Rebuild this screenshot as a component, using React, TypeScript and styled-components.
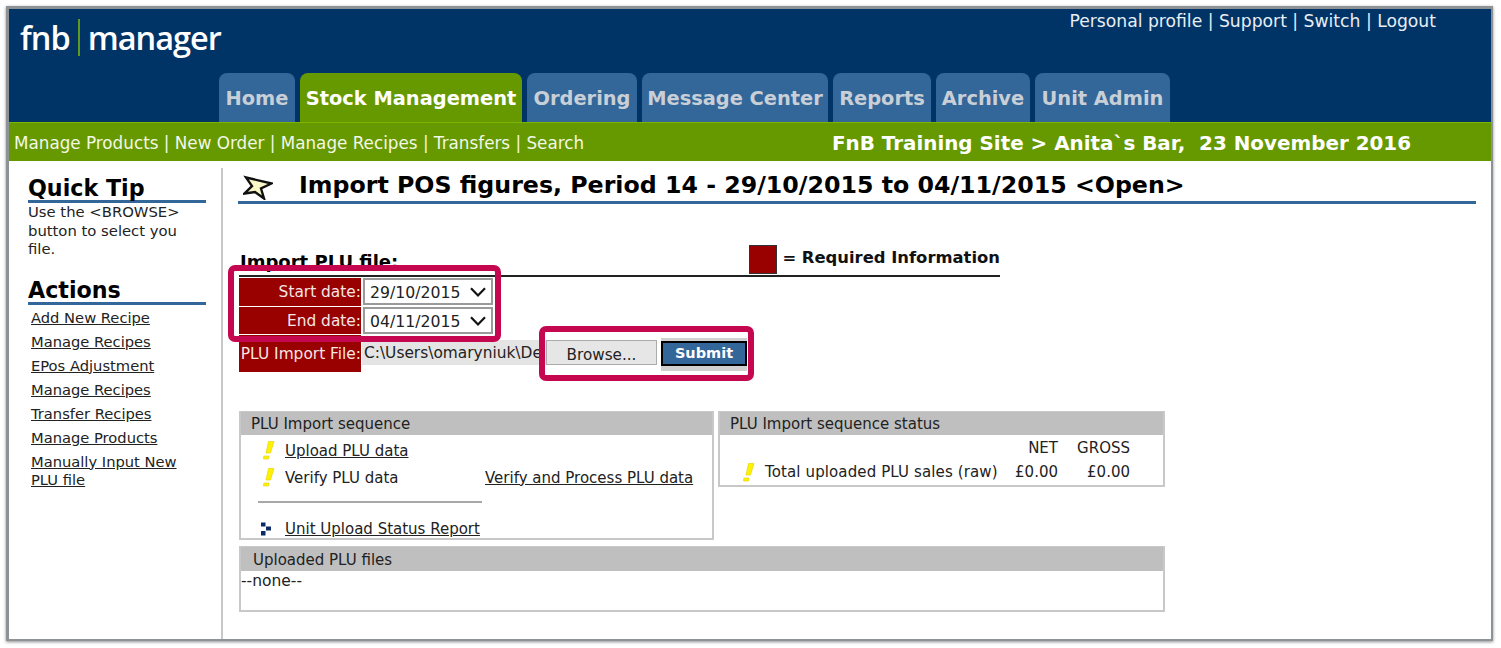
import React from "react";
import styled, { createGlobalStyle } from "styled-components";

const Navy = "#003366";
const Green = "#669900";
const Blue = "#336699";
const Crimson = "#990000";
const Mark = "#c4074f";
const Rule = "#c8c8c8";

const GlobalStyle = createGlobalStyle`
  html, body {
    margin: 0;
    padding: 0;
    background: #fff;
    font-family: "DejaVu Sans", Verdana, sans-serif;
    color: #111;
  }
  * { box-sizing: border-box; }
`;

const Page = styled.div`
  position: relative;
  width: 1501px;
  height: 648px;
  padding: 6px 8px 7px 6px;
  overflow: hidden;
`;

const Frame = styled.div`
  height: 100%;
  border: 1px solid #8d9296;
  border-width: 3px 2px 2px 3px;
  box-shadow: 0 1px 3px rgba(0, 0, 0, 0.45);
  background: #fff;
  display: flex;
  flex-direction: column;
`;

const Header = styled.header`
  height: 113px;
  background: ${Navy};
  display: flex;
  flex-direction: column;
  flex-shrink: 0;
`;

const TopRow = styled.div`
  height: 64px;
  display: flex;
  justify-content: space-between;
  padding: 3px 55px 0 11px;
`;

const Logo = styled.div`
  display: flex;
  align-items: center;
  height: 40px;
  margin-top: 5px;
  font-family: "Open Sans", sans-serif;
  font-size: 32.5px;
  font-weight: 600;
  color: #fff;
  letter-spacing: -1px;
`;

const LogoBar = styled.span`
  width: 2px;
  height: 37px;
  background: #5f9a1e;
  margin: 0 8px 0 8px;
`;

const UserLinks = styled.div`
  font-size: 17.2px;
  line-height: 18px;
  color: #e8eef4;
  white-space: pre;
`;

const Tabs = styled.nav`
  display: flex;
  gap: 5px;
  height: 49px;
  padding-left: 210px;
`;

const Tab = styled.div<{ $active?: boolean; $width: number }>`
  width: ${p => p.$width}px;
  display: flex;
  align-items: center;
  justify-content: center;
  padding-top: 2px;
  border-radius: 8px 8px 0 0;
  background: ${p => (p.$active ? Green : Blue)};
  color: ${p => (p.$active ? "#fff" : "#c9cfd6")};
  font-size: 19.4px;
  font-weight: 700;
  white-space: nowrap;
`;

const SubBar = styled.div`
  height: 39px;
  flex-shrink: 0;
  background: ${Green};
  border-top: 1px solid #7cb400;
  color: #f3f7e6;
  display: flex;
  align-items: center;
  justify-content: space-between;
  padding: 0 80px 0 5px;
`;

const SubLinks = styled.div`
  font-size: 16.8px;
  padding-top: 2px;
  white-space: pre;
`;

const SiteInfo = styled.div`
  font-size: 19.9px;
  font-weight: 700;
  padding-top: 2px;
  color: #fff;
  white-space: pre;
`;

const Body = styled.div`
  flex: 1;
  display: flex;
  min-height: 0;
  padding-top: 7px;
`;

const Sidebar = styled.aside`
  width: 214px;
  flex-shrink: 0;
  border-right: 2px solid ${Rule};
  padding: 0 15px 0 19px;
`;

const SideHeading = styled.h2`
  margin: 0;
  height: 35px;
  padding-top: 7px;
  font-size: 22.2px;
  line-height: 26px;
  font-weight: 700;
  color: #000;
  border-bottom: 3px solid ${Blue};
`;

const TipText = styled.p`
  margin: 0 0 11px;
  font-size: 14.8px;
  line-height: 18.5px;
  color: #222;
`;

const ActionList = styled.ul`
  list-style: none;
  margin: 0;
  padding: 4px 0 0 3px;
  display: flex;
  flex-direction: column;
  gap: 6px;
`;

const ActionItem = styled.li`
  font-size: 14.7px;
  line-height: 18px;
  color: #222;
  text-decoration: underline;
`;

const Content = styled.main`
  flex: 1;
  min-width: 0;
  padding: 0 15px 0 15px;
`;

const TitleRow = styled.div`
  height: 36px;
  display: flex;
  align-items: center;
  gap: 26px;
  padding-left: 5px;
  border-bottom: 3px solid ${Blue};
`;

const Title = styled.h1`
  margin: 0;
  font-size: 23.7px;
  font-weight: 700;
  color: #000;
  white-space: nowrap;
`;

const FormArea = styled.div`
  padding-left: 1px;
`;

const ImportHead = styled.div`
  width: 761px;
  height: 73px;
  display: flex;
  justify-content: space-between;
  align-items: flex-end;
  padding: 0 0 0 1px;
  border-bottom: 2px solid #222;
`;

const ImportTitle = styled.h3`
  margin: 0 0 3px;
  font-size: 18px;
  line-height: 20px;
  font-weight: 700;
  color: #000;
`;

const Legend = styled.div`
  display: flex;
  align-items: center;
  gap: 5px;
  font-size: 16.4px;
  font-weight: 700;
  color: #111;
  margin-bottom: 1px;
`;

const LegendText = styled.span`
  padding-bottom: 4px;
`;

const Swatch = styled.span`
  width: 28px;
  height: 29px;
  background: ${Crimson};
  border: 1px solid #333;
`;

const FormRow = styled.div<{ $height: number }>`
  display: flex;
  height: ${p => p.$height}px;
  margin-top: 1px;
`;

const FormLabel = styled.div<{ $tall?: boolean }>`
  width: 122px;
  flex-shrink: 0;
  background: ${Crimson};
  color: #f4e6e6;
  font-size: 15.4px;
  text-align: right;
  padding: ${p => (p.$tall ? "10px 0 0 0" : "4.5px 0 0 0")};
  white-space: nowrap;
`;

const DateSelect = styled.div`
  width: 130px;
  height: 27px;
  margin-left: 2px;
  border: 2px solid #9a9a9a;
  background: #fff;
  display: flex;
  align-items: center;
  justify-content: space-between;
  padding: 1px 5px 0 5px;
  font-size: 15.7px;
  color: #222;
`;

const FileField = styled.div`
  width: 184px;
  height: 25px;
  margin: 5px 0 0 1px;
  background: #e4e4e4;
  font-size: 15.4px;
  line-height: 27px;
  color: #222;
  padding-left: 2px;
  white-space: nowrap;
`;

const BrowseButton = styled.button`
  width: 111px;
  height: 25px;
  margin-top: 5px;
  background: #e6e6e6;
  border: 1px solid #ababab;
  font: 15.2px "DejaVu Sans", sans-serif;
  color: #222;
  padding: 4px 0 0;
`;

const SubmitWrap = styled.div`
  margin: 3px 0 0 4px;
  width: 86px;
  height: 33px;
  background: #d0d0d0;
  padding: 3px 0 5px;
`;

const SubmitButton = styled.button`
  width: 100%;
  height: 100%;
  background: ${Blue};
  border: 2px solid #000;
  color: #fff;
  font: 700 14.5px "DejaVu Sans", sans-serif;
  padding: 0 0 2px;
`;

const PanelGrid = styled.div`
  display: grid;
  grid-template-columns: 475px 447px;
  column-gap: 4px;
  align-items: start;
  width: 926px;
  margin-top: 39px;
`;

const Panel = styled.section<{ $height: number }>`
  height: ${p => p.$height}px;
  border: 2px solid ${Rule};
  border-top-width: 1px;
  background: #fff;
  font-size: 15px;
  color: #222;
`;

const WidePanel = styled(Panel)`
  width: 926px;
  margin-top: 6px;
`;

const PanelHead = styled.div<{ $indent: number }>`
  height: 23px;
  background: #bfbfbf;
  line-height: 25px;
  padding-left: ${p => p.$indent}px;
  color: #222;
`;

const WideHead = styled(PanelHead)`
  height: 24px;
  line-height: 26px;
`;

const SeqList = styled.div`
  padding-top: 2px;
`;

const SeqRow = styled.div`
  display: flex;
  align-items: center;
  height: 27px;
  padding-left: 22px;
`;

const SeqIcon = styled.span`
  width: 22px;
  display: flex;
  flex-shrink: 0;
`;

const PointerIcon = styled(SeqIcon)`
  width: 25px;
  margin-left: -3px;
`;

const Underlined = styled.span`
  text-decoration: underline;
`;

const SeqSplit = styled.span`
  width: 200px;
`;

const Divider = styled.hr`
  width: 224px;
  height: 2px;
  margin: 10px 0 12px 17px;
  border: 0;
  background: #a8a8a8;
`;

const StatusHead = styled.div`
  display: grid;
  grid-template-columns: 1fr 60px 72px;
  text-align: right;
  padding: 2px 33px 0 0;
  height: 25px;
  line-height: 22px;
`;

const StatusRow = styled.div`
  display: grid;
  grid-template-columns: 1fr 60px 72px;
  align-items: center;
  height: 24px;
  padding: 0 33px 0 23px;
`;

const StatusLabel = styled.span`
  display: flex;
  align-items: center;
  white-space: nowrap;
  letter-spacing: 0.12px;
`;

const StatusValue = styled.span`
  text-align: right;
`;

const NoneText = styled.div`
  font-size: 15.5px;
  line-height: 20px;
`;

// the crimson rounded callouts drawn over the screenshot
const Callout = styled.div<{ $x: number; $y: number; $w: number; $h: number }>`
  position: absolute;
  left: ${p => p.$x}px;
  top: ${p => p.$y}px;
  width: ${p => p.$w}px;
  height: ${p => p.$h}px;
  border: 6px solid ${Mark};
  border-radius: 7px;
  pointer-events: none;
`;

const Exclaim = () => (
  <svg width="12" height="19" viewBox="0 0 12 19">
    <path d="M5.5 0.5 L11 0.5 L7.5 12 L3 12 Z" fill="#fff200" stroke="#e0d000" strokeWidth="0.6" />
    <path d="M0.8 15 L6 15 L5.5 18 L0.5 18 Z" fill="#fff200" stroke="#e0d000" strokeWidth="0.6" />
  </svg>
);

const Pointer = () => (
  <svg width="12" height="14" viewBox="0 0 12 14">
    <g fill="#0b2a66">
      <rect x="1" y="0.5" width="4.5" height="4" />
      <rect x="6" y="4.5" width="5" height="4" />
      <rect x="1" y="9" width="4.5" height="4.5" />
    </g>
  </svg>
);

const Pennant = () => (
  <svg width="30" height="30" viewBox="0 0 30 30">
    <path
      d="M3 7.5 L28.5 13.5 L18 18.5 L21 28.5 L12 22 L1.5 23.5 L9 16 Z"
      fill="#fbf8c8"
      stroke="#111"
      strokeWidth="2.4"
      strokeLinejoin="miter"
    />
  </svg>
);

const Chevron = () => (
  <svg width="16" height="10" viewBox="0 0 16 10">
    <path d="M1 1.2 L8 8.4 L15 1.2" fill="none" stroke="#111" strokeWidth="2.2" />
  </svg>
);

const tabs = [
  { label: "Home", width: 76 },
  { label: "Stock Management", width: 222, active: true },
  { label: "Ordering", width: 110 },
  { label: "Message Center", width: 186 },
  { label: "Reports", width: 98 },
  { label: "Archive", width: 94 },
  { label: "Unit Admin", width: 135 },
];

const actions = [
  "Add New Recipe",
  "Manage Recipes",
  "EPos Adjustment",
  "Manage Recipes",
  "Transfer Recipes",
  "Manage Products",
  "Manually Input New PLU file",
];

export default function App() {
  return (
    <>
      <GlobalStyle />
      <Page>
        <Frame>
          <Header>
            <TopRow>
              <Logo>
                fnb
                <LogoBar />
                manager
              </Logo>
              <UserLinks>Personal profile | Support | Switch | Logout</UserLinks>
            </TopRow>
            <Tabs>
              {tabs.map(t => (
                <Tab key={t.label} $active={t.active} $width={t.width}>
                  {t.label}
                </Tab>
              ))}
            </Tabs>
          </Header>
          <SubBar>
            <SubLinks>Manage Products | New Order | Manage Recipes | Transfers | Search</SubLinks>
            <SiteInfo>FnB Training Site &gt; Anita`s Bar,  23 November 2016</SiteInfo>
          </SubBar>
          <Body>
            <Sidebar>
              <SideHeading>Quick Tip</SideHeading>
              <TipText>
                Use the &lt;BROWSE&gt;
                <br />
                button to select you
                <br />
                file.
              </TipText>
              <SideHeading>Actions</SideHeading>
              <ActionList>
                {actions.map((a, i) => (
                  <ActionItem key={i}>{a}</ActionItem>
                ))}
              </ActionList>
            </Sidebar>
            <Content>
              <TitleRow>
                <Pennant />
                <Title>Import POS figures, Period 14 - 29/10/2015 to 04/11/2015 &lt;Open&gt;</Title>
              </TitleRow>
              <FormArea>
                <ImportHead>
                  <ImportTitle>Import PLU file:</ImportTitle>
                  <Legend>
                    <Swatch />
                    <LegendText>= Required Information</LegendText>
                  </Legend>
                </ImportHead>
                <FormRow $height={28}>
                  <FormLabel>Start date:</FormLabel>
                  <DateSelect>
                    29/10/2015
                    <Chevron />
                  </DateSelect>
                </FormRow>
                <FormRow $height={27}>
                  <FormLabel>End date:</FormLabel>
                  <DateSelect>
                    04/11/2015
                    <Chevron />
                  </DateSelect>
                </FormRow>
                <FormRow $height={37}>
                  <FormLabel $tall>PLU Import File:</FormLabel>
                  <FileField>C:\Users\omaryniuk\De</FileField>
                  <BrowseButton>Browse...</BrowseButton>
                  <SubmitWrap>
                    <SubmitButton>Submit</SubmitButton>
                  </SubmitWrap>
                </FormRow>
                <PanelGrid>
                  <Panel $height={129}>
                    <PanelHead $indent={10}>PLU Import sequence</PanelHead>
                    <SeqList>
                      <SeqRow>
                        <SeqIcon>
                          <Exclaim />
                        </SeqIcon>
                        <Underlined>Upload PLU data</Underlined>
                      </SeqRow>
                      <SeqRow>
                        <SeqIcon>
                          <Exclaim />
                        </SeqIcon>
                        <SeqSplit>Verify PLU data</SeqSplit>
                        <Underlined>Verify and Process PLU data</Underlined>
                      </SeqRow>
                      <Divider />
                      <SeqRow>
                        <PointerIcon>
                          <Pointer />
                        </PointerIcon>
                        <Underlined>Unit Upload Status Report</Underlined>
                      </SeqRow>
                    </SeqList>
                  </Panel>
                  <Panel $height={76}>
                    <PanelHead $indent={10}>PLU Import sequence status</PanelHead>
                    <StatusHead>
                      <span />
                      <span>NET</span>
                      <span>GROSS</span>
                    </StatusHead>
                    <StatusRow>
                      <StatusLabel>
                        <SeqIcon>
                          <Exclaim />
                        </SeqIcon>
                        Total uploaded PLU sales (raw)
                      </StatusLabel>
                      <StatusValue>£0.00</StatusValue>
                      <StatusValue>£0.00</StatusValue>
                    </StatusRow>
                  </Panel>
                </PanelGrid>
                <WidePanel $height={66}>
                  <WideHead $indent={12}>Uploaded PLU files</WideHead>
                  <NoneText>--none--</NoneText>
                </WidePanel>
              </FormArea>
            </Content>
          </Body>
        </Frame>
        <Callout $x={228} $y={265} $w={273} $h={77} />
        <Callout $x={539} $y={326} $w={215} $h={55} />
      </Page>
    </>
  );
}
